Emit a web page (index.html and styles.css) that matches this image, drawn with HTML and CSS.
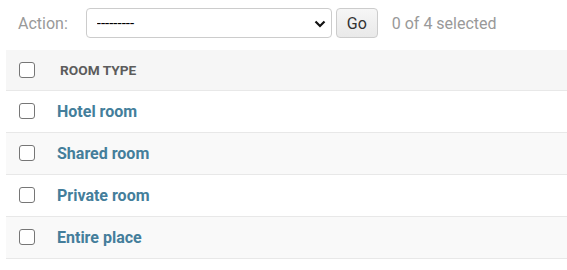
FILE: index.html
```html
<!DOCTYPE html>
<html lang="en">
<head>
  <meta charset="UTF-8">
  <title>Select room type to change</title>
  <link rel="stylesheet" href="styles.css">
</head>
<body>
  <div class="changelist">
    <div class="actions">
      <label class="action-label" for="action">Action:</label>
      <div class="select-wrap">
        <select id="action" class="action-select">
          <option>---------</option>
        </select>
        <svg class="chevron" width="12" height="8" viewBox="0 0 12 8"><path d="M1.5 1.5 L6 6 L10.5 1.5" fill="none" stroke="#111" stroke-width="2.2"/></svg>
      </div>
      <button class="button">Go</button>
      <span class="action-counter">0 of 4 selected</span>
    </div>

    <table class="result-list">
      <thead>
        <tr>
          <th class="check-col"><input type="checkbox" class="check"></th>
          <th class="col-title">Room type</th>
        </tr>
      </thead>
      <tbody>
        <tr>
          <td class="check-col"><input type="checkbox" class="check"></td>
          <td><a href="#">Hotel room</a></td>
        </tr>
        <tr>
          <td class="check-col"><input type="checkbox" class="check"></td>
          <td><a href="#">Shared room</a></td>
        </tr>
        <tr>
          <td class="check-col"><input type="checkbox" class="check"></td>
          <td><a href="#">Private room</a></td>
        </tr>
        <tr>
          <td class="check-col"><input type="checkbox" class="check"></td>
          <td><a href="#">Entire place</a></td>
        </tr>
      </tbody>
    </table>
  </div>
</body>
</html>
```

FILE: styles.css
```css
:root {
  --link-fg: #447e9b;
  --quiet: #999999;
  --hairline: #e8e8e8;
  --darkened-bg: #f6f6f6;
}

body {
  margin: 0;
  font-family: Roboto, "Liberation Sans", sans-serif;
  color: #333;
  background: #fff;
}

.changelist {
  padding-left: 6px;
}

.actions {
  display: flex;
  align-items: center;
  height: 50px;
  padding: 8px 12px 12px;
  box-sizing: border-box;
}

.action-label {
  font-size: 16px;
  color: var(--quiet);
  margin-right: 18px;
}

.select-wrap {
  position: relative;
}

.action-select {
  display: block;
  appearance: none;
  width: 246px;
  height: 30px;
  border: 1px solid #cccccc;
  border-radius: 4px;
  background: #fff;
  padding: 0 10px;
  font-family: Roboto, "Liberation Sans", sans-serif;
  font-size: 15px;
  color: #000;
}

.chevron {
  position: absolute;
  right: 6px;
  top: 12px;
  pointer-events: none;
}

.button {
  margin-left: 4px;
  width: 42px;
  height: 30px;
  border: 1px solid #cccccc;
  border-radius: 4px;
  background: linear-gradient(#f6f6f6, #e9e9e9);
  font-family: Roboto, "Liberation Sans", sans-serif;
  font-size: 16px;
  color: #333;
  padding: 0;
}

.action-counter {
  margin-left: 14px;
  font-size: 16px;
  color: var(--quiet);
}

.result-list {
  width: 100%;
  border-collapse: collapse;
  border-bottom: 1px solid #dddddd;
}

.result-list th,
.result-list td {
  text-align: left;
  padding: 0;
  vertical-align: middle;
}

.result-list thead tr {
  height: 40px;
  background: var(--darkened-bg);
  border-bottom: 1px solid var(--hairline);
}

.result-list tbody tr {
  height: 42px;
  border-bottom: 1px solid var(--hairline);
}

.result-list tbody tr:nth-child(even) {
  background: #f9f9f9;
}

.check-col {
  width: 51px;
  padding-left: 13px !important;
  box-sizing: border-box;
}

.check {
  appearance: none;
  display: block;
  margin: 0;
  width: 16px;
  height: 16px;
  border: 1px solid #767676;
  border-radius: 3px;
  background: #fff;
}

.col-title {
  font-size: 13.7px;
  font-weight: 700;
  text-transform: uppercase;
  color: #5c5c5c;
  padding-left: 3px !important;
}

.result-list a {
  color: var(--link-fg);
  font-size: 16px;
  font-weight: 700;
  text-decoration: none;
}
```
